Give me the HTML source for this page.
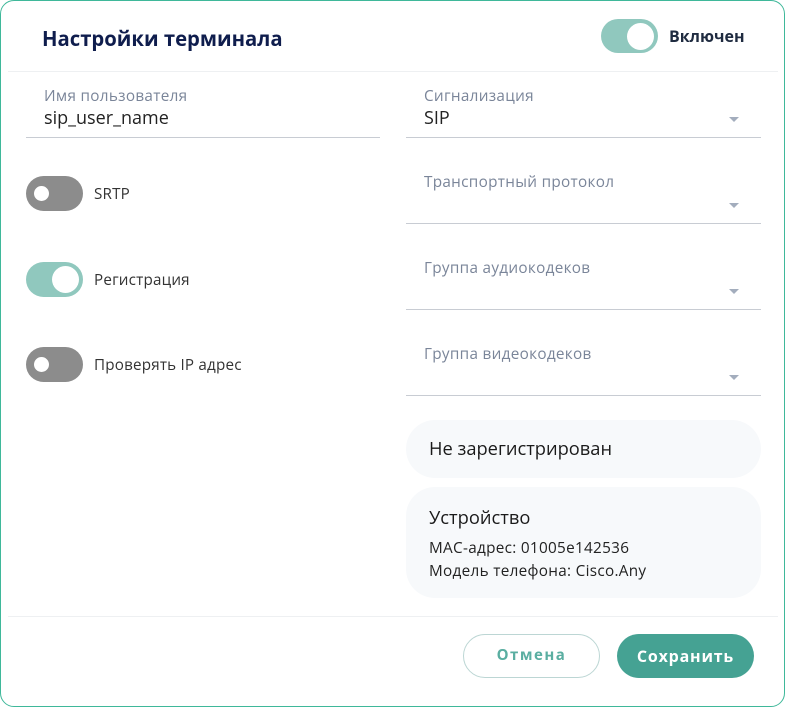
<!DOCTYPE html>
<html><head><meta charset="utf-8"><style>
*{box-sizing:border-box;margin:0;padding:0}
body{width:785px;height:707px;background:#fff;font-family:"Open Sans","Liberation Sans","DejaVu Sans",sans-serif;position:relative;overflow:hidden}
.card{position:absolute;left:0;top:0;width:785px;height:707px;border:1.5px solid #3fb89a;border-radius:14px;background:#fff}
.a{position:absolute;white-space:nowrap}
.hr{position:absolute;height:1px;background:#eef0f2}
.lbl{font-size:15.3px;color:#7a8599;letter-spacing:0.3px}
.val{font-size:18px;color:#222}
.line{position:absolute;height:1px;background:#c8ccd3}
.arr{position:absolute;width:0;height:0;border-left:5px solid transparent;border-right:5px solid transparent;border-top:5px solid #a3adbd}
.tg{position:absolute;width:57px;height:35px;border-radius:18px}
.off{background:#8c8c8c}
.off::after{content:"";position:absolute;left:8px;top:10px;width:15px;height:15px;border-radius:50%;background:#fff}
.on{background:#90c8be}
.on::after{content:"";position:absolute;right:4px;top:4px;width:27px;height:27px;border-radius:50%;background:#fff}
.tl{font-size:15.2px;color:#333;letter-spacing:0.2px}
.box{position:absolute;left:406px;width:355px;background:#f7f9fb;border-radius:29px}
</style></head><body>
<div class="card"></div>
<div class="a" style="left:42px;top:24px;font-size:20.3px;font-weight:bold;color:#0f1d4d">Настройки терминала</div>
<div class="tg on" style="left:601px;top:19px;height:34px"></div>
<div class="a" style="left:669px;top:25px;font-size:16px;font-weight:bold;color:#1f2b40">Включен</div>
<div class="hr" style="left:8px;top:71px;width:770px"></div>

<div class="a lbl" style="left:44px;top:86px">Имя пользователя</div>
<div class="a val" style="left:44px;top:106px">sip_user_name</div>
<div class="line" style="left:26px;top:137px;width:354px"></div>

<div class="a lbl" style="left:424px;top:86px">Сигнализация</div>
<div class="a val" style="left:424px;top:106px">SIP</div>
<div class="arr" style="left:729px;top:117px"></div>
<div class="line" style="left:406px;top:137px;width:355px"></div>

<div class="a lbl" style="left:424px;top:172px">Транспортный протокол</div>
<div class="arr" style="left:729px;top:203px"></div>
<div class="line" style="left:406px;top:223px;width:355px"></div>

<div class="a lbl" style="left:424px;top:258px">Группа аудиокодеков</div>
<div class="arr" style="left:729px;top:289px"></div>
<div class="line" style="left:406px;top:309px;width:355px"></div>

<div class="a lbl" style="left:424px;top:344px">Группа видеокодеков</div>
<div class="arr" style="left:729px;top:375px"></div>
<div class="line" style="left:406px;top:395px;width:355px"></div>

<div class="tg off" style="left:26px;top:176px"></div>
<div class="a tl" style="left:94px;top:184px">SRTP</div>
<div class="tg on" style="left:26px;top:262px"></div>
<div class="a tl" style="left:94px;top:270px">Регистрация</div>
<div class="tg off" style="left:26px;top:347px"></div>
<div class="a tl" style="left:94px;top:355px">Проверять IP адрес</div>

<div class="box" style="top:420px;height:58px"></div>
<div class="a" style="left:429px;top:436px;font-size:18.3px;color:#1a1a1a">Не зарегистрирован</div>
<div class="box" style="top:487px;height:111px"></div>
<div class="a" style="left:429px;top:505px;font-size:18.3px;color:#1a1a1a">Устройство</div>
<div class="a" style="left:429px;top:538px;font-size:15.3px;color:#222;letter-spacing:0.3px">MAC-адрес: 01005e142536</div>
<div class="a" style="left:429px;top:561px;font-size:15.3px;color:#222;letter-spacing:0.3px">Модель телефона: Cisco.Any</div>

<div class="hr" style="left:8px;top:616px;width:770px"></div>
<div class="a" style="left:463px;top:634px;width:137px;height:44px;border:1.5px solid #bcd6d4;border-radius:22px;text-align:center;line-height:41px;font-size:15px;font-weight:bold;color:#5aaea1;letter-spacing:1.5px">Отмена</div>
<div class="a" style="left:617px;top:634px;width:137px;height:44px;background:#45a293;border-radius:22px;text-align:center;line-height:44px;font-size:16px;font-weight:bold;color:#fff;letter-spacing:0.8px">Сохранить</div>
</body></html>
